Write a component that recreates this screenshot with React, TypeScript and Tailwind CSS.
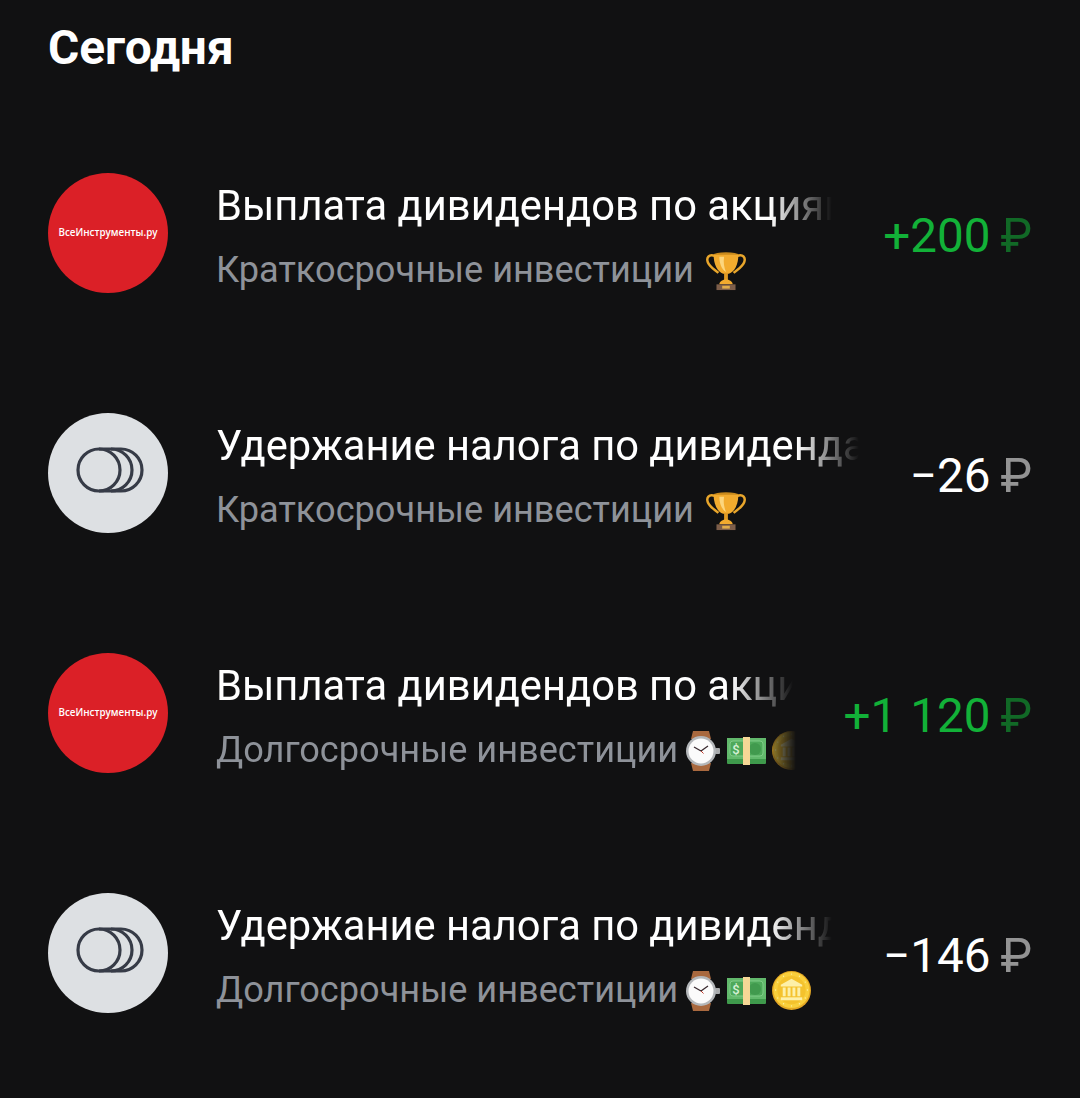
import type { ReactNode } from 'react';

function CoinsIcon() {
  return (
    <svg width="68" height="46" viewBox="0 0 68 46" fill="none" stroke="#363b47" strokeWidth="3.2" className="-mt-[7px] ml-[4px]">
      <circle cx="23" cy="23" r="21" />
      <path d="M23 2h12c11.6 0 21 9.4 21 21s-9.400 21-21 21H23" />
      <path d="M35 2h10c11.600 0 21 9.400 21 21s-9.400 21-21 21H35" />
    </svg>
  );
}

function Trophy() {
  return (
    <svg width="40" height="40" viewBox="0 0 42 42" className="shrink-0">
      <path d="M9 5C3 3 0 7 2 12c2 5 8 8 11 11" fill="none" stroke="#e9a62b" strokeWidth="2.600" />
      <path d="M33 5c6-2 9 2 7 7-2 5-8 8-11 11" fill="none" stroke="#e9a62b" strokeWidth="2.600" />
      <ellipse cx="21" cy="4" rx="13" ry="2.800" fill="#c98a1c" />
      <path d="M8 4h26c0 10-4 18-10 20h-6C12 22 8 14 8 4z" fill="#f2ab2e" />
      <path d="M14 6h5c-1 6 0 11 2 16-5-3-7-10-7-16z" fill="#fcd67e" />
      <rect x="19" y="23" width="4" height="8" fill="#e09a25" />
      <path d="M14 35c0-3 4-5 7-5s7 2 7 5z" fill="#f2ab2e" />
      <rect x="11" y="35" width="20" height="6" fill="#7d5e4a" />
      <rect x="17" y="36.500" width="8" height="3" fill="#e2ad4a" />
    </svg>
  );
}

function Watch() {
  return (
    <svg width="34" height="40" viewBox="0 0 34 40" className="shrink-0">
      <path d="M5 8l2-8h16l2 8zM5 32l2 8h16l2-8z" fill="#a9693f" />
      <rect x="29" y="17" width="5" height="6" rx="1" fill="#a9abad" />
      <circle cx="15" cy="20" r="15" fill="#b4b7ba" />
      <circle cx="15" cy="20" r="12.500" fill="#fbfbfb" />
      <path d="M15 20L8 16M15 20l7-5" stroke="#3a2b30" strokeWidth="1.300" fill="none" />
      <path d="M15 20l2.500 2.500" stroke="#c0392b" strokeWidth="1" fill="none" />
    </svg>
  );
}

function Money() {
  return (
    <svg width="42" height="28" viewBox="0 0 42 28" className="shrink-0">
      <rect x="2" y="1" width="39" height="26" rx="1" fill="#3f9a4c" />
      <rect x="2" y="1" width="39" height="21" fill="#62b96c" />
      <rect x="5" y="4" width="33" height="15" rx="3" fill="#4ea95a" stroke="#7fcb87" strokeWidth="1" />
      <circle cx="30" cy="12" r="6" fill="#419a4e" />
      <text x="11" y="17" fontSize="13" fontFamily="Roboto, sans-serif" fontWeight="500" fill="#d7f0d6" textAnchor="middle">$</text>
      <rect x="18" y="0" width="7" height="28" fill="#f6d796" />
    </svg>
  );
}

function BankCoin() {
  const rim = Array.from({ length: 12 }, (_, i) => (i * Math.PI) / 6);
  return (
    <svg width="39" height="39" viewBox="0 0 40 40" className="shrink-0">
      <circle cx="20" cy="20" r="20" fill="#e4a824" />
      <circle cx="20" cy="19.500" r="18.500" fill="#f9cf3b" />
      <circle cx="20" cy="19.500" r="14.500" fill="#f4c22d" />
      {rim.map((a, i) => (
        <circle key={i} cx={20 + 16.3 * Math.cos(a)} cy={19.5 + 16.3 * Math.sin(a)} r="0.7" fill="#fdf0a9" />
      ))}
      <path d="M20 8l11 6v2H9v-2z" fill="#fdf0a9" />
      <path d="M11 17h3v9h-3zM16 17h3v9h-3zM21 17h3v9h-3zM26 17h3v9h-3z" fill="#fdf0a9" />
      <rect x="9" y="27" width="22" height="3" fill="#fdf0a9" />
    </svg>
  );
}

const brandLogo = (
  <div className="flex h-[120px] w-[120px] shrink-0 items-center justify-center rounded-full bg-[#db2027]">
    <span className="font-['Open_Sans',sans-serif] text-[9.800px] font-semibold leading-none text-white">ВсеИнструменты.ру</span>
  </div>
);

const coinsLogo = (
  <div className="flex h-[120px] w-[120px] shrink-0 items-center justify-center rounded-full bg-[#dde0e3]">
    <CoinsIcon />
  </div>
);

const shortTerm: ReactNode = (
  <>
    <span>Краткосрочные инвестиции</span>
    <span className="ml-[12px] shrink-0"><Trophy /></span>
  </>
);

const longTerm: ReactNode = (
  <>
    <span>Долгосрочные инвестиции</span>
    <span className="ml-[8px] flex shrink-0 items-center gap-[5px]">
      <Watch />
      <Money />
      <BankCoin />
    </span>
  </>
);

const rows = [
  { logo: brandLogo, title: 'Выплата дивидендов по акциям ВсеИнструменты.ру', sub: shortTerm, amount: '+200', positive: true, fadeSub: false },
  { logo: coinsLogo, title: 'Удержание налога по дивидендам ВсеИнструменты', sub: shortTerm, amount: '−26', positive: false, fadeSub: false },
  { logo: brandLogo, title: 'Выплата дивидендов по акциям ВсеИнструменты.ру', sub: longTerm, amount: '+1 120', positive: true, fadeSub: true },
  { logo: coinsLogo, title: 'Удержание налога по дивидендам ВсеИнструменты', sub: longTerm, amount: '−146', positive: false, fadeSub: false },
];

export default function App() {
  return (
    <div className="h-[1098px] w-[1080px] overflow-hidden bg-[#111112] px-12 font-['Roboto',sans-serif]">
      <h1 className="pt-[20px] text-[47.800px] font-bold leading-[56px] text-white">Сегодня</h1>
      <div className="mt-[37px]">
        {rows.map((row, i) => (
          <div key={i} className="flex h-[240px] items-center">
            {row.logo}
            <div className="ml-[48px] mt-[7px] flex min-w-0 flex-1 flex-col overflow-hidden">
              <div className="overflow-hidden whitespace-nowrap text-[41.700px] leading-[48px] text-white [mask-image:linear-gradient(to_right,black_calc(100%-65px),transparent_calc(100%-3px))]">{row.title}</div>
              <div className={`mt-[20px] flex h-[42px] items-center overflow-hidden whitespace-nowrap text-[36.150px] text-[#8e9299] ${row.fadeSub ? '[mask-image:linear-gradient(to_right,black_calc(100%-26px),rgba(0,0,0,0.5)_calc(100%-22px),transparent_100%)]' : ''}`}>{row.sub}</div>
            </div>
            <div className={`ml-[48px] mt-[6px] flex shrink-0 whitespace-nowrap text-[47.600px] leading-[56px] ${row.positive ? 'text-[#12b138]' : 'text-white'}`}>
              <span className="[word-spacing:1px]">{row.amount}</span>
              <span className="ml-[10px] opacity-55">₽</span>
            </div>
          </div>
        ))}
      </div>
    </div>
  );
}
